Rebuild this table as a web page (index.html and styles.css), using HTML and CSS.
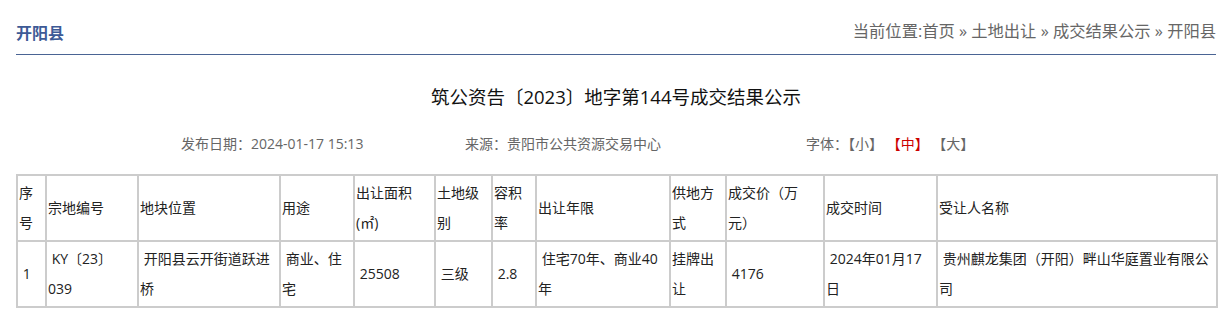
FILE: index.html
```html
<!DOCTYPE html>
<html lang="zh-CN">
<head>
<meta charset="utf-8">
<title>开阳县</title>
<link rel="stylesheet" href="styles.css">
</head>
<body>
<div class="wrap">
  <div class="topbar">
    <div class="site">开阳县</div>
    <div class="crumb">当前位置:首页 » 土地出让 » 成交结果公示 » 开阳县</div>
  </div>
  <h1 class="title">筑公资告〔2023〕地字第144号成交结果公示</h1>
  <div class="meta">
    <span class="m-date">发布日期：2024-01-17 15:13</span>
    <span class="m-src">来源：贵阳市公共资源交易中心</span>
    <span class="m-font">字体：<span class="fs">【小】</span> <span class="fs on">【中】</span> <span class="fs">【大】</span></span>
  </div>
  <table class="grid">
    <colgroup>
      <col class="c1"><col class="c2"><col class="c3"><col class="c4"><col class="c5"><col class="c6">
      <col class="c7"><col class="c8"><col class="c9"><col class="c10"><col class="c11"><col class="c12">
    </colgroup>
    <tr>
      <td>序号</td>
      <td>宗地编号</td>
      <td>地块位置</td>
      <td>用途</td>
      <td>出让面积(㎡)</td>
      <td>土地级别</td>
      <td>容积率</td>
      <td>出让年限</td>
      <td>供地方式</td>
      <td>成交价（万<br>元）</td>
      <td>成交时间</td>
      <td>受让人名称</td>
    </tr>
    <tr>
      <td>&nbsp;1</td>
      <td>&nbsp;KY〔23〕039</td>
      <td>&nbsp;开阳县云开街道跃进桥</td>
      <td>&nbsp;商业、住宅</td>
      <td>&nbsp;25508</td>
      <td>&nbsp;三级</td>
      <td>&nbsp;2.8</td>
      <td>&nbsp;住宅70年、商业40年</td>
      <td>挂牌出让</td>
      <td>&nbsp;4176</td>
      <td>&nbsp;2024年01月17日</td>
      <td>&nbsp;贵州麒龙集团（开阳）畔山华庭置业有限公司</td>
    </tr>
  </table>
</div>
</body>
</html>
```

FILE: styles.css
```css
html, body {
  margin: 0;
  padding: 0;
  background: #fff;
}
body {
  font-family: "Open Sans", "Noto Sans CJK SC", sans-serif;
  color: #222;
}
.wrap {
  padding: 0 10px 0 16px;
}
.topbar {
  display: flex;
  justify-content: space-between;
  align-items: center;
  height: 46px;
  padding-top: 8px;
  border-bottom: 1px solid #4a6494;
}
.site {
  font-size: 16px;
  font-weight: bold;
  color: #3d5a96;
  padding-top: 3px;
  line-height: 24px;
}
.crumb {
  font-size: 16.3px;
  color: #666;
  line-height: 24px;
}
.title {
  margin: 27px 0 0;
  font-size: 18.5px;
  font-weight: normal;
  line-height: 30px;
  text-align: center;
  color: #111;
}
.meta {
  display: flex;
  margin-top: 20px;
  padding-left: 165px;
  font-size: 14px;
  line-height: 24px;
  color: #666;
}
.m-date { width: 284px; }
.m-src { width: 341px; }
.fs { color: #666; }
.fs.on { color: #c00; }
.grid {
  margin-top: 18px;
  width: 1200px;
  border-collapse: collapse;
  table-layout: fixed;
  font-size: 14px;
  line-height: 30px;
  color: #222;
}
.grid td {
  border: 2px solid #ccc;
  padding: 2px 1px;
  vertical-align: middle;
}
.c1 { width: 29px; }
.c2 { width: 92px; }
.c3 { width: 142px; }
.c4 { width: 74px; }
.c5 { width: 81px; }
.c6 { width: 57px; }
.c7 { width: 44px; }
.c8 { width: 134px; }
.c9 { width: 56px; }
.c10 { width: 98px; }
.c11 { width: 113px; }
.c12 { width: 280px; }
```
